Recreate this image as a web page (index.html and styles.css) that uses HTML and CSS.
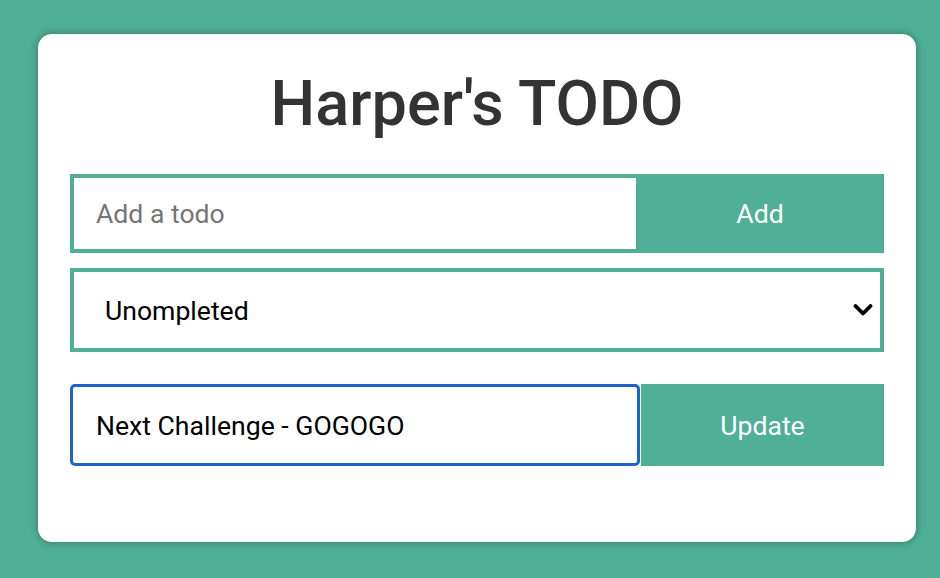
FILE: index.html
```html
<!DOCTYPE html>
<html lang="en">
<head>
<meta charset="utf-8">
<title>Harper's TODO</title>
<link rel="stylesheet" href="styles.css">
</head>
<body>
<main class="card">
  <h1 class="title">Harper's TODO</h1>
  <form class="row row-add">
    <input class="field field-add" type="text" placeholder="Add a todo">
    <button class="btn btn-add" type="button">Add</button>
  </form>
  <div class="select-wrap">
    <select class="select">
      <option>Unompleted</option>
      <option>Completed</option>
      <option>All</option>
    </select>
    <svg class="chevron" width="20" height="12" viewBox="0 0 20 12" aria-hidden="true">
      <path d="M2.5 2 L10 9.5 L17.5 2" fill="none" stroke="#000" stroke-width="3.8" stroke-linecap="round" stroke-linejoin="round"/>
    </svg>
  </div>
  <form class="row row-update">
    <input class="field field-update" type="text" value="Next Challenge - GOGOGO">
    <button class="btn btn-update" type="button">Update</button>
  </form>
</main>
</body>
</html>
```
FILE: styles.css
```css
html, body {
  margin: 0;
  padding: 0;
}
body {
  background: #50b097;
  font-family: Roboto, "Liberation Sans", sans-serif;
  padding: 34px 24px 0 38px;
  height: 578px;
  box-sizing: border-box;
}
.card {
  width: 878px;
  height: 508px;
  box-sizing: border-box;
  background: #fff;
  border-radius: 14px;
  box-shadow: 0 0 8px rgba(0, 0, 0, 0.35);
  padding: 34px 32px 0 32px;
  display: flex;
  flex-direction: column;
}
.title {
  margin: 0;
  font-size: 63px;
  line-height: 72px;
  font-weight: 500;
  color: #333;
  text-align: center;
}
.row {
  display: flex;
  margin: 0;
}
.row-add {
  margin-top: 34px;
  height: 79px;
}
.row-update {
  margin-top: 32px;
  height: 82px;
}
.field {
  box-sizing: border-box;
  height: 100%;
  margin: 0;
  font-family: Roboto, "Liberation Sans", sans-serif;
  font-size: 26.6px;
  color: #000;
  outline: none;
  background: #fff;
}
.field-add {
  width: 566px;
  border: 4px solid #50b097;
  border-right: none;
  padding: 0 0 0 22px;
}
.field-add::placeholder {
  color: #757575;
}
.field-update {
  width: 570px;
  border: 3px solid #1d63c9;
  border-radius: 5px;
  padding: 0 0 0 23px;
}
.btn {
  flex: 1;
  height: 100%;
  margin: 0;
  border: none;
  background: #50b097;
  color: #fff;
  font-family: Roboto, "Liberation Sans", sans-serif;
  font-size: 26.6px;
  padding: 0;
}
.btn-update {
  margin-left: 1px;
}
.select-wrap {
  position: relative;
  margin-top: 15px;
  height: 84px;
}
.select {
  appearance: none;
  -webkit-appearance: none;
  box-sizing: border-box;
  width: 814px;
  height: 100%;
  margin: 0;
  border: 4px solid #50b097;
  border-radius: 0;
  background: #fff;
  padding: 0 0 0 31px;
  font-family: Roboto, "Liberation Sans", sans-serif;
  font-size: 26.6px;
  color: #000;
  outline: none;
}
.chevron {
  position: absolute;
  right: 11px;
  top: 36px;
}
```
